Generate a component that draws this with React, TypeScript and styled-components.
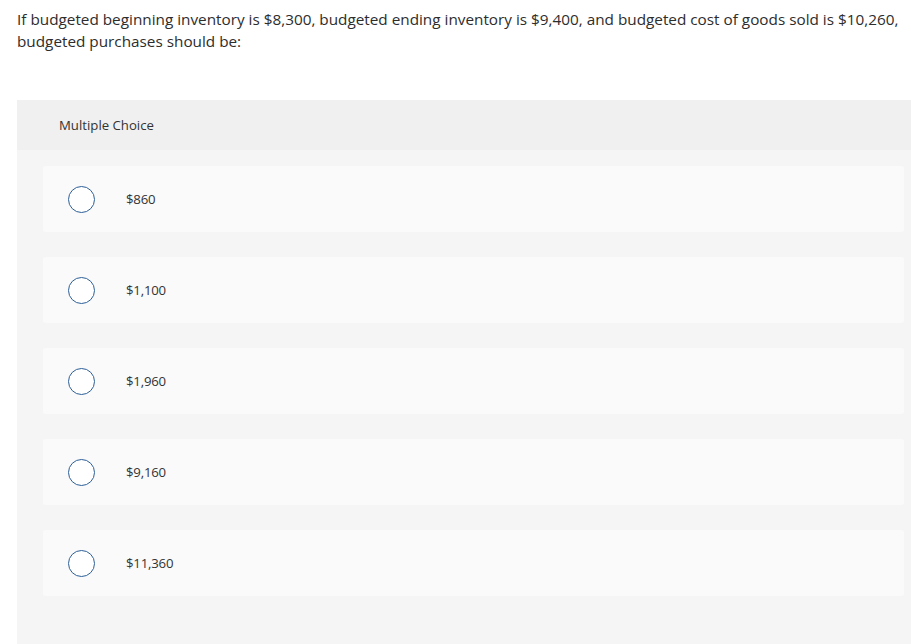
import React from 'react'
import styled, { createGlobalStyle } from 'styled-components'

const GlobalStyle = createGlobalStyle`
  html, body {
    margin: 0;
    padding: 0;
    background: #fff;
  }
  body {
    font-family: 'Open Sans', 'Liberation Sans', sans-serif;
    color: #333;
  }
`

const choices = ['$860', '$1,100', '$1,960', '$9,160', '$11,360']

export default function App () {
  return (
    <>
      <GlobalStyle />
      <StyledPage>
        <Question>
          If budgeted beginning inventory is $8,300, budgeted ending inventory is $9,400, and budgeted cost of goods sold is $10,260, budgeted purchases should be:
        </Question>
        <Panel>
          <PanelHeader>Multiple Choice</PanelHeader>
          <ChoiceList>
            {choices.map((choice) => (
              <Choice key={choice}>
                <Radio />
                <ChoiceText>{choice}</ChoiceText>
              </Choice>
            ))}
          </ChoiceList>
        </Panel>
      </StyledPage>
    </>
  )
}

const StyledPage = styled.div`
  min-height: 644px;
  padding: 8px 0 0 17px;
  box-sizing: border-box;
  display: flex;
  flex-direction: column;
`

const Question = styled.p`
  margin: 0;
  padding-right: 4px;
  font-size: 15.3px;
  line-height: 22px;
  color: #2d2d2d;
`

const Panel = styled.div`
  margin-top: 48px;
  flex: 1;
  background: #f5f5f5;
  display: flex;
  flex-direction: column;
`

const PanelHeader = styled.div`
  height: 50px;
  display: flex;
  align-items: center;
  padding-left: 42px;
  background: #f0f0f0;
  font-size: 13.2px;
  color: #333;
`

const ChoiceList = styled.div`
  display: flex;
  flex-direction: column;
  gap: 25px;
  padding: 16px 7px 40px 26px;
`

const Choice = styled.div`
  height: 66px;
  display: flex;
  align-items: center;
  padding-left: 25px;
  background: #fafafa;
  border-radius: 3px;
`

const Radio = styled.span`
  width: 25px;
  height: 25px;
  border: 1.5px solid #2c5f98;
  border-radius: 50%;
  background: #fff;
  flex-shrink: 0;
`

const ChoiceText = styled.span`
  margin-left: 31px;
  font-size: 13.2px;
  letter-spacing: -0.2px;
  color: #333;
`
